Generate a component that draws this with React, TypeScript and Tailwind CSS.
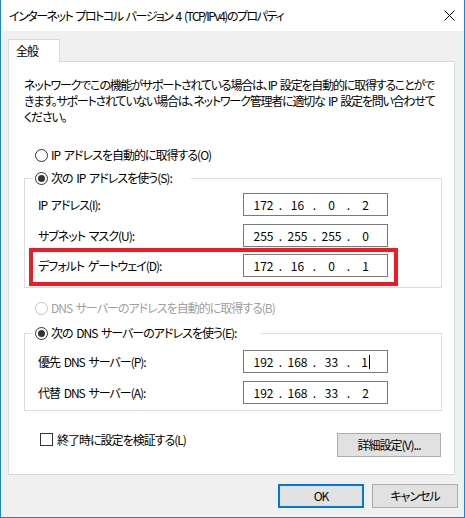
import React from 'react';

function Radio({ checked, disabled }: { checked?: boolean; disabled?: boolean }) {
  return (
    <span
      className={`w-[13px] h-[13px] rounded-full border bg-white flex items-center justify-center shrink-0 ${
        disabled ? 'border-[#c5c5c5]' : 'border-[#333333]'
      }`}
    >
      {checked && <span className="w-[7px] h-[7px] rounded-full bg-[#333333]" />}
    </span>
  );
}

function IpBox({ parts, cursor }: { parts: string[]; cursor?: boolean }) {
  return (
    <div className="w-[145px] h-[23px] border border-[#7a7a7a] bg-white flex items-center pl-[7px] text-[12px] leading-none tracking-normal">
      {parts.map((p, i) => (
        <React.Fragment key={i}>
          {i > 0 && <span className="w-[9px] text-center">.</span>}
          <span className="w-[25px] flex items-center justify-center">
            {p}
            {cursor && i === 3 && <span className="w-px h-[14px] bg-black ml-px" />}
          </span>
        </React.Fragment>
      ))}
    </div>
  );
}

function Row({ label, parts, cursor, className = '' }: { label: string; parts: string[]; cursor?: boolean; className?: string }) {
  return (
    <div className={`flex items-center h-[23px] ${className}`}>
      <span className="w-[205px] text-[12px]">{label}</span>
      <IpBox parts={parts} cursor={cursor} />
    </div>
  );
}

function Button({ children, focused, className = '' }: { children: React.ReactNode; focused?: boolean; className?: string }) {
  return (
    <div
      className={`h-[24px] bg-[#e1e1e1] flex items-center justify-center text-[12px] ${
        focused ? 'border-2 border-[#0078d7]' : 'border border-[#adadad]'
      } ${className}`}
    >
      {children}
    </div>
  );
}

export default function App() {
  return (
    <div className="relative w-[465px] h-[518px] bg-[#f0f0f0] border-x border-b border-[#1883d7] flex flex-col text-black tracking-[-1px] [word-spacing:2px] font-['Noto_Sans_CJK_JP',sans-serif] [font-feature-settings:'palt']">
      <div className="h-[31px] bg-white flex items-center pl-[8px] pr-[9px] shrink-0">
        <span className="text-[12px] whitespace-nowrap tracking-[-1.5px]">インターネット プロトコル バージョン 4 (TCP/IPv4)のプロパティ</span>
        <svg className="ml-auto" width="11" height="11" viewBox="0 0 11 11">
          <path d="M0.5 0.5 L10.5 10.5 M10.5 0.5 L0.5 10.5" stroke="#000" strokeWidth="1" />
        </svg>
      </div>

      <div className="flex flex-col pl-[7px] pr-[6px] pt-[8px]">
        <div className="relative z-10 w-[52px] h-[23px] -mb-px bg-white border border-b-0 border-[#d9d9d9] flex items-center pl-[7px] pb-px text-[12px]">
          全般
        </div>

        <div className="w-[447px] h-[414px] bg-white border border-[#d9d9d9] pl-[15px] pr-[12px] pt-[15px] flex flex-col">
          <p className="text-[12px] leading-[16px] whitespace-nowrap tracking-[-1.2px]">
            ネットワークでこの機能がサポートされている場合は、IP 設定を自動的に取得することがで
            <br />
            きます。サポートされていない場合は、ネットワーク管理者に適切な IP 設定を問い合わせて
            <br />
            ください。
          </p>

          <div className="mt-[22px] ml-[11px] h-[16px] flex items-center gap-[3px] text-[12px]">
            <Radio />
            <span>IP アドレスを自動的に取得する(O)</span>
          </div>

          <fieldset className="mt-[7px] border border-[#dcdcdc] pb-[10px]">
            <legend className="ml-[8px] w-[158px] pl-[2px] h-[16px] flex items-center gap-[3px] text-[12px]">
              <Radio checked />
              <span>次の IP アドレスを使う(S):</span>
            </legend>
            <div className="pl-[13px] pt-[7px]">
              <Row label="IP アドレス(I):" parts={['172', '16', '0', '2']} />
              <Row label="サブネット マスク(U):" parts={['255', '255', '255', '0']} className="mt-[8px]" />
              <Row label="デフォルト ゲートウェイ(D):" parts={['172', '16', '0', '1']} className="mt-[7px]" />
            </div>
          </fieldset>

          <div className="mt-[12px] ml-[11px] h-[16px] flex items-center gap-[3px] text-[12px] text-[#a0a0a0]">
            <Radio disabled />
            <span>DNS サーバーのアドレスを自動的に取得する(B)</span>
          </div>

          <fieldset className="mt-[9px] border border-[#dcdcdc] pb-[6px]">
            <legend className="ml-[8px] w-[228px] pl-[2px] h-[16px] flex items-center gap-[3px] text-[12px]">
              <Radio checked />
              <span>次の DNS サーバーのアドレスを使う(E):</span>
            </legend>
            <div className="pl-[13px] pt-[9px]">
              <Row label="優先 DNS サーバー(P):" parts={['192', '168', '33', '1']} cursor />
              <Row label="代替 DNS サーバー(A):" parts={['192', '168', '33', '2']} className="mt-[8px]" />
            </div>
          </fieldset>

          <div className="mt-[22px] flex items-start justify-between">
            <div className="ml-[16px] h-[13px] flex items-center gap-[4px] text-[12px]">
              <span className="w-[13px] h-[13px] border border-[#333333] bg-white" />
              <span>終了時に設定を検証する(L)</span>
            </div>
            <Button className="w-[104px] mr-[1px]">詳細設定(V)...</Button>
          </div>
        </div>

        <div className="mt-[9px] flex justify-end gap-[8px]">
          <Button focused className="w-[86px]">OK</Button>
          <Button className="w-[86px]">キャンセル</Button>
        </div>
      </div>

      {/* red annotation box over the gateway row */}
      <div className="pointer-events-none absolute left-[28px] top-[248px] w-[369px] h-[38px] border-4 border-[#ed1c24]" />
    </div>
  );
}
